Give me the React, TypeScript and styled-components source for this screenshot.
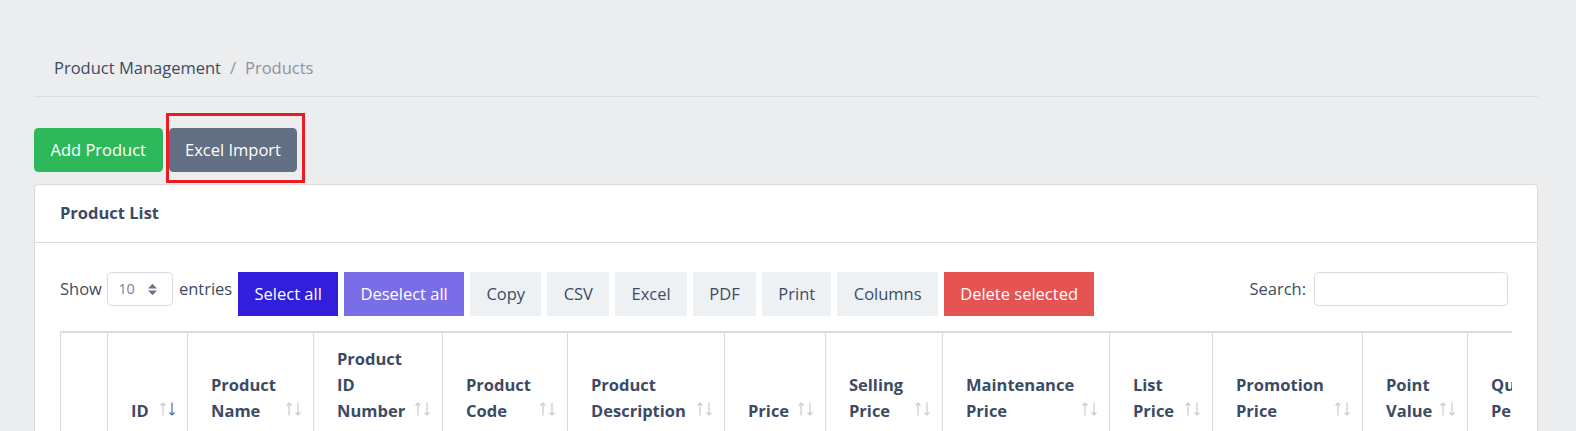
import React from "react";
import styled, { createGlobalStyle } from "styled-components";

const GlobalStyle = createGlobalStyle`
  * {
    box-sizing: border-box;
  }

  body {
    margin: 0;
    background: #ebedef;
    font-family: "Open Sans", "Noto Sans", sans-serif;
    font-size: 16.5px;
    line-height: 26.4px;
    color: #3c4b64;
  }
`;

const StyledPage = styled.main`
  padding: 0 38px 0 34px;
`;

const StyledBreadcrumb = styled.nav`
  display: flex;
  padding: 55px 20px 15px;
  border-bottom: 1px solid #d8dbe0;
`;

const StyledCrumb = styled.span<{ $active?: boolean }>`
  color: ${(p) => (p.$active ? "#8a93a2" : "#3c4b64")};
`;

const StyledSeparator = styled.span`
  color: #8a93a2;
  padding: 0 9px;
`;

const StyledToolbar = styled.div`
  display: flex;
  gap: 6px;
  margin-top: 31px;
`;

const StyledButton = styled.button<{ $bg: string; $color?: string; $radius?: boolean }>`
  border: none;
  margin: 0;
  font-family: inherit;
  font-size: 16.5px;
  line-height: 26.4px;
  padding: 8.6px ${(p) => (p.$radius ? "16.5px" : "16.3px")};
  background: ${(p) => p.$bg};
  color: ${(p) => p.$color || "#fff"};
  border-radius: ${(p) => (p.$radius ? "4.4px" : "0")};
  white-space: nowrap;
  cursor: pointer;
`;

const StyledHighlight = styled.span`
  position: relative;
  display: inline-flex;

  &::after {
    content: "";
    position: absolute;
    top: -15px;
    left: -3px;
    right: -8px;
    bottom: -11px;
    border: 3px solid #ed1c24;
    pointer-events: none;
  }
`;

const StyledCard = styled.section`
  margin-top: 12px;
  background: #fff;
  border: 1px solid #d8dbe0;
  border-radius: 4.4px;
`;

const StyledCardHeader = styled.header`
  padding: 15.3px 25px;
  border-bottom: 1px solid #d8dbe0;
  font-weight: 700;
`;

const StyledCardBody = styled.div`
  padding: 29px 25px;
`;

const StyledControls = styled.div`
  display: flex;
  justify-content: space-between;
  align-items: flex-start;
`;

const StyledControlsLeft = styled.div`
  display: flex;
  align-items: flex-start;
  gap: 6px;
`;

const StyledLength = styled.label`
  display: flex;
  align-items: center;
  height: 34.4px;
  gap: 5px;
`;

const StyledSelect = styled.div`
  display: flex;
  align-items: center;
  justify-content: space-between;
  width: 66px;
  height: 34.4px;
  padding: 0 14px 0 10.5px;
  border: 1px solid #d8dbe0;
  border-radius: 4.4px;
  font-size: 14.4px;
  color: #768192;
  margin-right: 1px;
`;

const StyledSearch = styled.label`
  display: flex;
  align-items: center;
  gap: 8px;
  margin-right: 4px;
`;

const StyledInput = styled.input`
  width: 194px;
  height: 34px;
  border: 1px solid #d8dbe0;
  border-radius: 4.4px;
  font-family: inherit;
  font-size: 15px;
  padding: 0 10px;
`;

const StyledTableWrap = styled.div`
  margin-top: 15px;
  overflow: hidden;
`;

const StyledTable = styled.table<{ $width: number }>`
  table-layout: fixed;
  width: ${(p) => p.$width}px;
  border-collapse: separate;
  border-spacing: 0;
`;

const StyledTh = styled.th<{ $width: number; $sortable: boolean }>`
  position: relative;
  width: ${(p) => p.$width}px;
  padding: ${(p) => (p.$sortable ? "13px 30px 13px 23px" : "13px 0")};
  border-top: 2px solid #d8dbe0;
  border-left: 1px solid #d8dbe0;
  vertical-align: bottom;
  text-align: left;
  font-weight: 700;
  color: #3c4b64;
`;

const StyledSort = styled.svg`
  position: absolute;
  right: 12px;
  bottom: 22px;
`;

type SortState = "none" | "both" | "asc";

const columns: { label: string; width: number; sort: SortState }[] = [
  { label: "", width: 47, sort: "none" },
  { label: "ID", width: 80, sort: "asc" },
  { label: "Product Name", width: 126, sort: "both" },
  { label: "Product ID Number", width: 129, sort: "both" },
  { label: "Product Code", width: 125, sort: "both" },
  { label: "Product Description", width: 157, sort: "both" },
  { label: "Price", width: 101, sort: "both" },
  { label: "Selling Price", width: 117, sort: "both" },
  { label: "Maintenance Price", width: 167, sort: "both" },
  { label: "List Price", width: 103, sort: "both" },
  { label: "Promotion Price", width: 150, sort: "both" },
  { label: "Point Value", width: 105, sort: "both" },
  { label: "Quantity Per Unit", width: 140, sort: "both" },
];

const SortIcon = ({ active }: { active: boolean }) => (
  <StyledSort width="15" height="14" viewBox="0 0 15 14" fill="none" strokeWidth="1.2">
    <g stroke="#c4c9d0">
      <path d="M3 13.5V1" />
      <path d="M0.5 3.5L3 1l2.5 2.5" />
    </g>
    <g stroke={active ? "#3a6db5" : "#c4c9d0"}>
      <path d="M12 0.5V13" />
      <path d="M9.5 10.5L12 13l2.5-2.5" />
    </g>
  </StyledSort>
);

const Caret = () => (
  <svg width="11" height="13" viewBox="0 0 11 13">
    <path d="M1 5.5h9L5.5 0.8z" fill="#6b7687" />
    <path d="M1 7.5h9L5.5 12.2z" fill="#6b7687" />
  </svg>
);

const tableButtons = ["Copy", "CSV", "Excel", "PDF", "Print", "Columns"];

const App = () => {
  const tableWidth = columns.reduce((sum, c) => sum + c.width, 0);

  return (
    <>
      <GlobalStyle />
      <StyledPage>
        <StyledBreadcrumb>
          <StyledCrumb>Product Management</StyledCrumb>
          <StyledSeparator>/</StyledSeparator>
          <StyledCrumb $active>Products</StyledCrumb>
        </StyledBreadcrumb>

        <StyledToolbar>
          <StyledButton $bg="#2eb85c" $radius>
            Add Product
          </StyledButton>
          <StyledHighlight>
            <StyledButton $bg="#636f83" $radius>
              Excel Import
            </StyledButton>
          </StyledHighlight>
        </StyledToolbar>

        <StyledCard>
          <StyledCardHeader>Product List</StyledCardHeader>
          <StyledCardBody>
            <StyledControls>
              <StyledControlsLeft>
                <StyledLength>
                  Show
                  <StyledSelect>
                    10
                    <Caret />
                  </StyledSelect>
                  entries
                </StyledLength>
                <StyledButton $bg="#321fdb">Select all</StyledButton>
                <StyledButton $bg="#7a6de8">Deselect all</StyledButton>
                {tableButtons.map((label) => (
                  <StyledButton key={label} $bg="#eef1f4" $color="#3c4b64">
                    {label}
                  </StyledButton>
                ))}
                <StyledButton $bg="#e55353">Delete selected</StyledButton>
              </StyledControlsLeft>
              <StyledSearch>
                Search:
                <StyledInput type="search" />
              </StyledSearch>
            </StyledControls>

            <StyledTableWrap>
              <StyledTable $width={tableWidth}>
                <thead>
                  <tr>
                    {columns.map((c, i) => (
                      <StyledTh key={i} $width={c.width} $sortable={c.sort !== "none"}>
                        {c.label}
                        {c.sort !== "none" && <SortIcon active={c.sort === "asc"} />}
                      </StyledTh>
                    ))}
                  </tr>
                </thead>
              </StyledTable>
            </StyledTableWrap>
          </StyledCardBody>
        </StyledCard>
      </StyledPage>
    </>
  );
};

export default App;
